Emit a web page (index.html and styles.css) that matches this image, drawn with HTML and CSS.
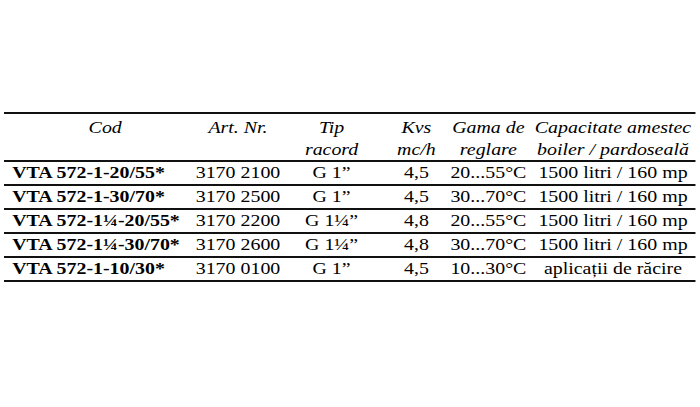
FILE: index.html
```html
<!DOCTYPE html>
<html lang="ro">
<head>
<meta charset="utf-8">
<link rel="stylesheet" href="styles.css">
</head>
<body>
<div class="sheet">
  <div class="tbl">
    <div class="row head">
      <div class="cell c1h"><span>Cod</span></div>
      <div class="cell"><span>Art. Nr.</span></div>
      <div class="cell"><span>Tip</span><span>racord</span></div>
      <div class="cell"><span>Kvs</span><span>mc/h</span></div>
      <div class="cell"><span>Gama de</span><span>reglare</span></div>
      <div class="cell c6"><span>Capacitate amestec</span><span>boiler / pardoseală</span></div>
    </div>
    <div class="row">
      <div class="cell code">VTA 572-1-20/55*</div>
      <div class="cell">3170 2100</div>
      <div class="cell">G 1”</div>
      <div class="cell">4,5</div>
      <div class="cell">20...55°C</div>
      <div class="cell c6">1500 litri / 160 mp</div>
    </div>
    <div class="row">
      <div class="cell code">VTA 572-1-30/70*</div>
      <div class="cell">3170 2500</div>
      <div class="cell">G 1”</div>
      <div class="cell">4,5</div>
      <div class="cell">30...70°C</div>
      <div class="cell c6">1500 litri / 160 mp</div>
    </div>
    <div class="row">
      <div class="cell code">VTA 572-1¼-20/55*</div>
      <div class="cell">3170 2200</div>
      <div class="cell">G 1¼”</div>
      <div class="cell">4,8</div>
      <div class="cell">20...55°C</div>
      <div class="cell c6">1500 litri / 160 mp</div>
    </div>
    <div class="row">
      <div class="cell code">VTA 572-1¼-30/70*</div>
      <div class="cell">3170 2600</div>
      <div class="cell">G 1¼”</div>
      <div class="cell">4,8</div>
      <div class="cell">30...70°C</div>
      <div class="cell c6">1500 litri / 160 mp</div>
    </div>
    <div class="row">
      <div class="cell code">VTA 572-1-10/30*</div>
      <div class="cell">3170 0100</div>
      <div class="cell">G 1”</div>
      <div class="cell">4,5</div>
      <div class="cell">10...30°C</div>
      <div class="cell c6">aplicații de răcire</div>
    </div>
  </div>
</div>
</body>
</html>
```

FILE: styles.css
```css
html, body {
  margin: 0;
  padding: 0;
  background: #ffffff;
}
body {
  width: 700px;
  height: 407px;
  overflow: hidden;
  font-family: "Liberation Serif", "Times New Roman", serif;
  color: #000000;
}
.sheet {
  padding: 112px 0 0 4px;
}
.tbl {
  width: 591px;
  transform: scaleX(1.17);
  transform-origin: 0 0;
  border-top: 2px solid #111111;
  font-size: 17px;
}
.row {
  display: grid;
  grid-template-columns: 159px 82px 78px 67px 56px 149px;
  height: 22px;
  border-bottom: 2px solid #111111;
  line-height: 22px;
}
.row.head {
  height: 46px;
  font-style: italic;
}
.cell {
  display: flex;
  flex-direction: column;
  align-items: center;
  white-space: nowrap;
}
.head .cell {
  padding-top: 3px;
}
.head .c1h {
  padding-left: 14px;
}
.c6 {
  padding-left: 8px;
}
.code {
  align-items: flex-start;
  padding-left: 7px;
  font-weight: bold;
}
```
